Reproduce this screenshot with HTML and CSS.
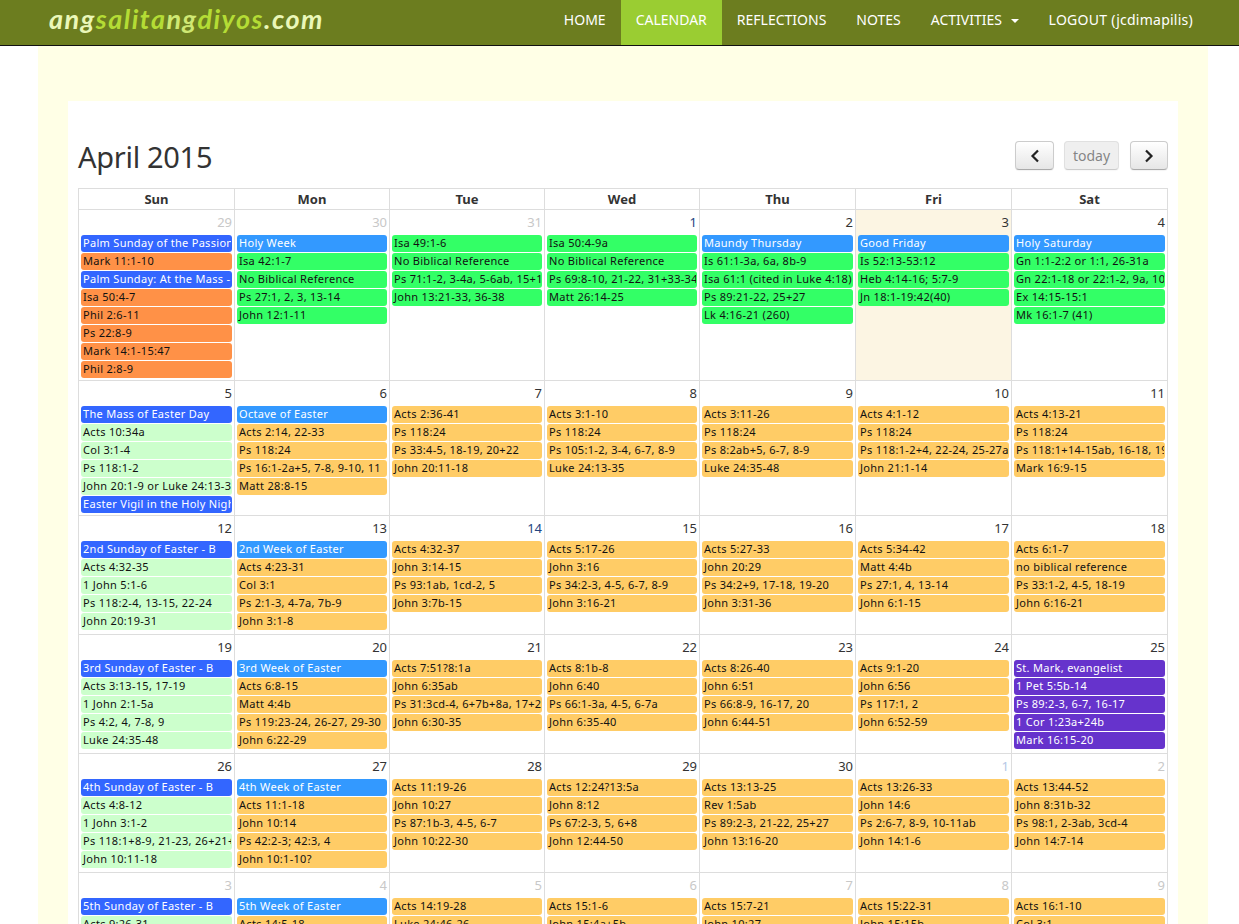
FILE: index.html
```html
<!doctype html>
<html lang="en">
<head>
<meta charset="utf-8">
<title>Calendar - angsalitangdiyos.com</title>
<link rel="stylesheet" href="styles.css">
</head>
<body>

<!-- ---------- navbar ---------- -->
<nav class="navbar">
  <a class="brand" href="#"><span class="pale">ang</span><span class="lime">salita</span><span class="soft">ng</span><span class="lime">diyos</span><span class="pale">.com</span></a>
  <ul class="nav">
    <li><a href="#">HOME</a></li>
    <li class="active"><a href="#">CALENDAR</a></li>
    <li><a href="#">REFLECTIONS</a></li>
    <li><a href="#">NOTES</a></li>
    <li><a href="#">ACTIVITIES <span class="caret"></span></a></li>
    <li class="logout"><a href="#">LOGOUT (jcdimapilis)</a></li>
  </ul>
</nav>

<div class="wrap">
<div class="panel">

  <div class="toolbar">
    <h2>April 2015</h2>
    <div class="buttons">
      <button class="btn btn-arrow"><svg width="10" height="14" viewBox="0 0 10 14"><path d="M8 1.5 2.5 7 8 12.5" fill="none" stroke="#222" stroke-width="2.2"/></svg></button>
      <button class="btn btn-today" disabled>today</button>
      <button class="btn btn-arrow btn-next"><svg width="10" height="14" viewBox="0 0 10 14"><path d="M2 1.5 7.5 7 2 12.5" fill="none" stroke="#222" stroke-width="2.2"/></svg></button>
    </div>
  </div>

  <!-- ---------- calendar ---------- -->
  <div class="cal">
    <div class="week head">
      <div class="cell">Sun</div><div class="cell">Mon</div><div class="cell">Tue</div><div class="cell">Wed</div><div class="cell">Thu</div><div class="cell">Fri</div><div class="cell">Sat</div>
    </div>

    <div class="week">
      <div class="cell">
        <div class="num other">29</div>
        <div class="ev royal">Palm Sunday of the Passion of the Lord</div>
        <div class="ev orange">Mark 11:1-10</div>
        <div class="ev royal">Palm Sunday: At the Mass - B</div>
        <div class="ev orange">Isa 50:4-7</div>
        <div class="ev orange">Phil 2:6-11</div>
        <div class="ev orange">Ps 22:8-9</div>
        <div class="ev orange">Mark 14:1-15:47</div>
        <div class="ev orange">Phil 2:8-9</div>
      </div>
      <div class="cell">
        <div class="num other">30</div>
        <div class="ev sky">Holy Week</div>
        <div class="ev green">Isa 42:1-7</div>
        <div class="ev green">No Biblical Reference</div>
        <div class="ev green">Ps 27:1, 2, 3, 13-14</div>
        <div class="ev green">John 12:1-11</div>
      </div>
      <div class="cell">
        <div class="num other">31</div>
        <div class="ev green">Isa 49:1-6</div>
        <div class="ev green">No Biblical Reference</div>
        <div class="ev green">Ps 71:1-2, 3-4a, 5-6ab, 15+17</div>
        <div class="ev green">John 13:21-33, 36-38</div>
      </div>
      <div class="cell">
        <div class="num navy">1</div>
        <div class="ev green">Isa 50:4-9a</div>
        <div class="ev green">No Biblical Reference</div>
        <div class="ev green">Ps 69:8-10, 21-22, 31+33-34</div>
        <div class="ev green">Matt 26:14-25</div>
      </div>
      <div class="cell">
        <div class="num">2</div>
        <div class="ev sky">Maundy Thursday</div>
        <div class="ev green">Is 61:1-3a, 6a, 8b-9</div>
        <div class="ev green">Isa 61:1 (cited in Luke 4:18)</div>
        <div class="ev green">Ps 89:21-22, 25+27</div>
        <div class="ev green">Lk 4:16-21 (260)</div>
      </div>
      <div class="cell today">
        <div class="num">3</div>
        <div class="ev sky">Good Friday</div>
        <div class="ev green">Is 52:13-53:12</div>
        <div class="ev green">Heb 4:14-16; 5:7-9</div>
        <div class="ev green">Jn 18:1-19:42(40)</div>
      </div>
      <div class="cell">
        <div class="num">4</div>
        <div class="ev sky">Holy Saturday</div>
        <div class="ev green">Gn 1:1-2:2 or 1:1, 26-31a</div>
        <div class="ev green">Gn 22:1-18 or 22:1-2, 9a, 10-13</div>
        <div class="ev green">Ex 14:15-15:1</div>
        <div class="ev green">Mk 16:1-7 (41)</div>
      </div>
    </div>

    <div class="week">
      <div class="cell">
        <div class="num">5</div>
        <div class="ev royal">The Mass of Easter Day</div>
        <div class="ev mint">Acts 10:34a</div>
        <div class="ev mint">Col 3:1-4</div>
        <div class="ev mint">Ps 118:1-2</div>
        <div class="ev mint">John 20:1-9 or Luke 24:13-35</div>
        <div class="ev royal">Easter Vigil in the Holy Night</div>
      </div>
      <div class="cell">
        <div class="num">6</div>
        <div class="ev sky">Octave of Easter</div>
        <div class="ev amber">Acts 2:14, 22-33</div>
        <div class="ev amber">Ps 118:24</div>
        <div class="ev amber">Ps 16:1-2a+5, 7-8, 9-10, 11</div>
        <div class="ev amber">Matt 28:8-15</div>
      </div>
      <div class="cell">
        <div class="num">7</div>
        <div class="ev amber">Acts 2:36-41</div>
        <div class="ev amber">Ps 118:24</div>
        <div class="ev amber">Ps 33:4-5, 18-19, 20+22</div>
        <div class="ev amber">John 20:11-18</div>
      </div>
      <div class="cell">
        <div class="num">8</div>
        <div class="ev amber">Acts 3:1-10</div>
        <div class="ev amber">Ps 118:24</div>
        <div class="ev amber">Ps 105:1-2, 3-4, 6-7, 8-9</div>
        <div class="ev amber">Luke 24:13-35</div>
      </div>
      <div class="cell">
        <div class="num">9</div>
        <div class="ev amber">Acts 3:11-26</div>
        <div class="ev amber">Ps 118:24</div>
        <div class="ev amber">Ps 8:2ab+5, 6-7, 8-9</div>
        <div class="ev amber">Luke 24:35-48</div>
      </div>
      <div class="cell">
        <div class="num">10</div>
        <div class="ev amber">Acts 4:1-12</div>
        <div class="ev amber">Ps 118:24</div>
        <div class="ev amber">Ps 118:1-2+4, 22-24, 25-27a</div>
        <div class="ev amber">John 21:1-14</div>
      </div>
      <div class="cell">
        <div class="num">11</div>
        <div class="ev amber">Acts 4:13-21</div>
        <div class="ev amber">Ps 118:24</div>
        <div class="ev amber">Ps 118:1+14-15ab, 16-18, 19-21</div>
        <div class="ev amber">Mark 16:9-15</div>
      </div>
    </div>

    <div class="week">
      <div class="cell">
        <div class="num">12</div>
        <div class="ev royal">2nd Sunday of Easter - B</div>
        <div class="ev mint">Acts 4:32-35</div>
        <div class="ev mint">1 John 5:1-6</div>
        <div class="ev mint">Ps 118:2-4, 13-15, 22-24</div>
        <div class="ev mint">John 20:19-31</div>
      </div>
      <div class="cell">
        <div class="num">13</div>
        <div class="ev sky">2nd Week of Easter</div>
        <div class="ev amber">Acts 4:23-31</div>
        <div class="ev amber">Col 3:1</div>
        <div class="ev amber">Ps 2:1-3, 4-7a, 7b-9</div>
        <div class="ev amber">John 3:1-8</div>
      </div>
      <div class="cell">
        <div class="num navy">14</div>
        <div class="ev amber">Acts 4:32-37</div>
        <div class="ev amber">John 3:14-15</div>
        <div class="ev amber">Ps 93:1ab, 1cd-2, 5</div>
        <div class="ev amber">John 3:7b-15</div>
      </div>
      <div class="cell">
        <div class="num">15</div>
        <div class="ev amber">Acts 5:17-26</div>
        <div class="ev amber">John 3:16</div>
        <div class="ev amber">Ps 34:2-3, 4-5, 6-7, 8-9</div>
        <div class="ev amber">John 3:16-21</div>
      </div>
      <div class="cell">
        <div class="num">16</div>
        <div class="ev amber">Acts 5:27-33</div>
        <div class="ev amber">John 20:29</div>
        <div class="ev amber">Ps 34:2+9, 17-18, 19-20</div>
        <div class="ev amber">John 3:31-36</div>
      </div>
      <div class="cell">
        <div class="num">17</div>
        <div class="ev amber">Acts 5:34-42</div>
        <div class="ev amber">Matt 4:4b</div>
        <div class="ev amber">Ps 27:1, 4, 13-14</div>
        <div class="ev amber">John 6:1-15</div>
      </div>
      <div class="cell">
        <div class="num">18</div>
        <div class="ev amber">Acts 6:1-7</div>
        <div class="ev amber">no biblical reference</div>
        <div class="ev amber">Ps 33:1-2, 4-5, 18-19</div>
        <div class="ev amber">John 6:16-21</div>
      </div>
    </div>

    <div class="week">
      <div class="cell">
        <div class="num">19</div>
        <div class="ev royal">3rd Sunday of Easter - B</div>
        <div class="ev mint">Acts 3:13-15, 17-19</div>
        <div class="ev mint">1 John 2:1-5a</div>
        <div class="ev mint">Ps 4:2, 4, 7-8, 9</div>
        <div class="ev mint">Luke 24:35-48</div>
      </div>
      <div class="cell">
        <div class="num">20</div>
        <div class="ev sky">3rd Week of Easter</div>
        <div class="ev amber">Acts 6:8-15</div>
        <div class="ev amber">Matt 4:4b</div>
        <div class="ev amber">Ps 119:23-24, 26-27, 29-30</div>
        <div class="ev amber">John 6:22-29</div>
      </div>
      <div class="cell">
        <div class="num">21</div>
        <div class="ev amber">Acts 7:51?8:1a</div>
        <div class="ev amber">John 6:35ab</div>
        <div class="ev amber">Ps 31:3cd-4, 6+7b+8a, 17+21</div>
        <div class="ev amber">John 6:30-35</div>
      </div>
      <div class="cell">
        <div class="num">22</div>
        <div class="ev amber">Acts 8:1b-8</div>
        <div class="ev amber">John 6:40</div>
        <div class="ev amber">Ps 66:1-3a, 4-5, 6-7a</div>
        <div class="ev amber">John 6:35-40</div>
      </div>
      <div class="cell">
        <div class="num">23</div>
        <div class="ev amber">Acts 8:26-40</div>
        <div class="ev amber">John 6:51</div>
        <div class="ev amber">Ps 66:8-9, 16-17, 20</div>
        <div class="ev amber">John 6:44-51</div>
      </div>
      <div class="cell">
        <div class="num">24</div>
        <div class="ev amber">Acts 9:1-20</div>
        <div class="ev amber">John 6:56</div>
        <div class="ev amber">Ps 117:1, 2</div>
        <div class="ev amber">John 6:52-59</div>
      </div>
      <div class="cell">
        <div class="num">25</div>
        <div class="ev purple">St. Mark, evangelist</div>
        <div class="ev purple">1 Pet 5:5b-14</div>
        <div class="ev purple">Ps 89:2-3, 6-7, 16-17</div>
        <div class="ev purple">1 Cor 1:23a+24b</div>
        <div class="ev purple">Mark 16:15-20</div>
      </div>
    </div>

    <div class="week">
      <div class="cell">
        <div class="num">26</div>
        <div class="ev royal">4th Sunday of Easter - B</div>
        <div class="ev mint">Acts 4:8-12</div>
        <div class="ev mint">1 John 3:1-2</div>
        <div class="ev mint">Ps 118:1+8-9, 21-23, 26+21+29</div>
        <div class="ev mint">John 10:11-18</div>
      </div>
      <div class="cell">
        <div class="num">27</div>
        <div class="ev sky">4th Week of Easter</div>
        <div class="ev amber">Acts 11:1-18</div>
        <div class="ev amber">John 10:14</div>
        <div class="ev amber">Ps 42:2-3; 42:3, 4</div>
        <div class="ev amber">John 10:1-10?</div>
      </div>
      <div class="cell">
        <div class="num">28</div>
        <div class="ev amber">Acts 11:19-26</div>
        <div class="ev amber">John 10:27</div>
        <div class="ev amber">Ps 87:1b-3, 4-5, 6-7</div>
        <div class="ev amber">John 10:22-30</div>
      </div>
      <div class="cell">
        <div class="num">29</div>
        <div class="ev amber">Acts 12:24?13:5a</div>
        <div class="ev amber">John 8:12</div>
        <div class="ev amber">Ps 67:2-3, 5, 6+8</div>
        <div class="ev amber">John 12:44-50</div>
      </div>
      <div class="cell">
        <div class="num">30</div>
        <div class="ev amber">Acts 13:13-25</div>
        <div class="ev amber">Rev 1:5ab</div>
        <div class="ev amber">Ps 89:2-3, 21-22, 25+27</div>
        <div class="ev amber">John 13:16-20</div>
      </div>
      <div class="cell">
        <div class="num other-blue">1</div>
        <div class="ev amber">Acts 13:26-33</div>
        <div class="ev amber">John 14:6</div>
        <div class="ev amber">Ps 2:6-7, 8-9, 10-11ab</div>
        <div class="ev amber">John 14:1-6</div>
      </div>
      <div class="cell">
        <div class="num other">2</div>
        <div class="ev amber">Acts 13:44-52</div>
        <div class="ev amber">John 8:31b-32</div>
        <div class="ev amber">Ps 98:1, 2-3ab, 3cd-4</div>
        <div class="ev amber">John 14:7-14</div>
      </div>
    </div>

    <div class="week">
      <div class="cell">
        <div class="num other">3</div>
        <div class="ev royal">5th Sunday of Easter - B</div>
        <div class="ev mint">Acts 9:26-31</div>
      </div>
      <div class="cell">
        <div class="num other">4</div>
        <div class="ev sky">5th Week of Easter</div>
        <div class="ev amber">Acts 14:5-18</div>
      </div>
      <div class="cell">
        <div class="num other">5</div>
        <div class="ev amber">Acts 14:19-28</div>
        <div class="ev amber">Luke 24:46-26</div>
      </div>
      <div class="cell">
        <div class="num other">6</div>
        <div class="ev amber">Acts 15:1-6</div>
        <div class="ev amber">John 15:4a+5b</div>
      </div>
      <div class="cell">
        <div class="num other">7</div>
        <div class="ev amber">Acts 15:7-21</div>
        <div class="ev amber">John 10:27</div>
      </div>
      <div class="cell">
        <div class="num other">8</div>
        <div class="ev amber">Acts 15:22-31</div>
        <div class="ev amber">John 15:15b</div>
      </div>
      <div class="cell">
        <div class="num other">9</div>
        <div class="ev amber">Acts 16:1-10</div>
        <div class="ev amber">Col 3:1</div>
      </div>
    </div>
  </div>

</div>
</div>

</body>
</html>
```

FILE: styles.css
```css
*{box-sizing:border-box;margin:0;padding:0}
html,body{
  height:924px;
  overflow:hidden;
  background:#fff;
  color:#333;
  font-family:"Noto Sans","Open Sans",Arial,sans-serif;
}

/* navbar */
.navbar{
  height:46px;
  display:flex;
  justify-content:space-between;
  background:#6c7d1f;
  border-bottom:1px solid #111;
  padding:0 31px 0 49px;
}
.brand{
  font:italic 700 27px/38px Lato,sans-serif;
  letter-spacing:1.5px;
  text-decoration:none;
}
.pale{color:#eaf7b8}
.soft{color:#cfe873}
.lime{color:#b4dc35}
.nav{display:flex;list-style:none}
.nav a{
  display:block;
  height:45px;
  padding:0 15px;
  line-height:40px;
  font-size:14px;
  color:#fff;
  text-decoration:none;
}
.nav .active a{background:#9acd32}
.nav .logout a{letter-spacing:.25px}
.caret{
  display:inline-block;
  margin-left:5px;
  vertical-align:middle;
  border-top:4px solid #fff;
  border-left:4px solid transparent;
  border-right:4px solid transparent;
}

/* page */
.wrap{
  width:1170px;
  height:878px;
  margin-left:38px;
  padding:55px 30px 0;
  background:#ffffe6;
}
.panel{
  height:100%;
  padding:40px 10px 0;
  background:#fff;
}
.toolbar{
  display:flex;
  justify-content:space-between;
  height:29px;
  margin-bottom:18px;
}
h2{font-size:29px;font-weight:400;line-height:32px;letter-spacing:-.3px}
.buttons{display:flex;gap:10px}
.btn{
  height:29px;
  border:1px solid #ccc;
  border-bottom-color:#aaa;
  border-radius:4px;
  background:linear-gradient(#fff,#e6e6e6);
  box-shadow:0 1px 1px rgba(0,0,0,.05);
  font:14px "Noto Sans",sans-serif;
  color:#333;
}
.btn-arrow{width:39px;display:flex;align-items:center;justify-content:center}
.btn-next{width:38px;margin-left:1px}
.btn-today{width:55px;opacity:.6;background:#e6e6e6}

/* calendar */
.cal{border-top:1px solid #ddd;border-left:1px solid #ddd}
.week{
  display:grid;
  grid-template-columns:156px 155px 155px 155px 156px 156px 156px;
  min-height:119px;
  border-bottom:1px solid #ddd;
}
.cell{
  min-width:0;
  padding:0 2px 1px;
  border-right:1px solid #ddd;
}
.head{min-height:0}
.head .cell{
  height:20px;
  font-size:13px;
  font-weight:700;
  line-height:20px;
  text-align:center;
}
.today{background:#fcf5e3}
.num{
  height:25px;
  font-size:13px;
  line-height:24px;
  text-align:right;
}
.other{color:#c8c8c8}
.other-blue{color:#b5c8e6}
.navy{color:#23447f}

/* events */
.ev{
  height:17px;
  margin-bottom:1px;
  padding:0 1px;
  border:1px solid transparent;
  border-radius:3px;
  font-size:11px;
  letter-spacing:.3px;
  line-height:14px;
  color:#111;
  white-space:nowrap;
  overflow:hidden;
}
.royal{background:#3366ff;color:#fff}
.sky{background:#3399ff;color:#fff}
.green{background:#33ff66}
.orange{background:#ff9147}
.mint{background:#ccffcc}
.amber{background:#ffcc66}
.purple{background:#6633cc;color:#fff}
```
